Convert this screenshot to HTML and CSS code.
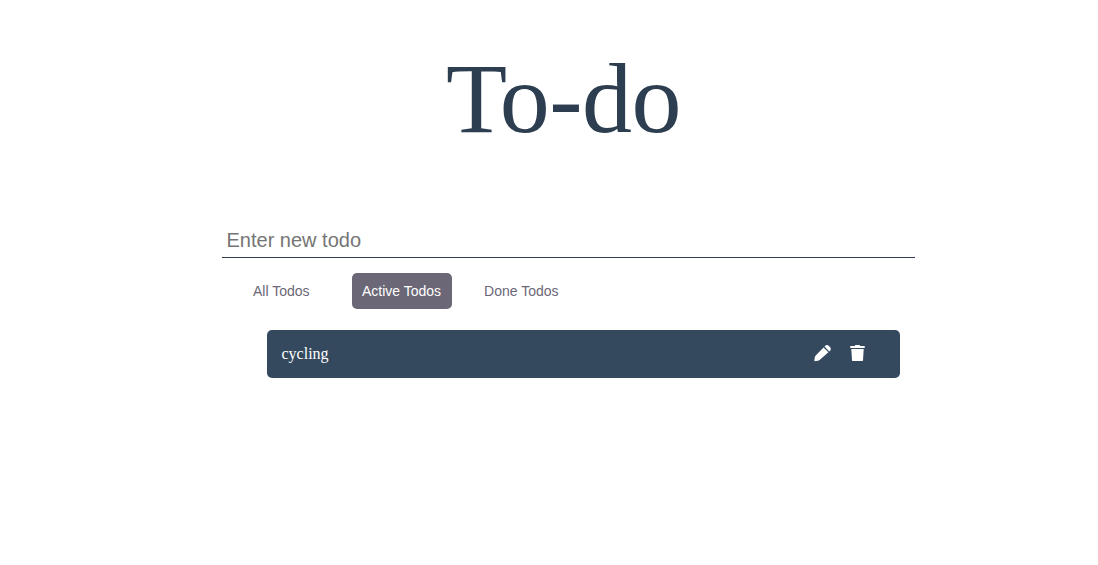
FILE: index.html
```html
<!DOCTYPE html>
<html lang="en">
<head>
<meta charset="utf-8">
<title>To-do</title>
<link rel="stylesheet" href="styles.css">
</head>
<body>
<main class="app">
  <h1 class="title">To-do</h1>
  <input class="new-todo" type="text" placeholder="Enter new todo">
  <nav class="filters">
    <button class="filter all">All Todos</button>
    <button class="filter active">Active Todos</button>
    <button class="filter">Done Todos</button>
  </nav>
  <ul class="list">
    <li class="todo">
      <span class="todo-text">cycling</span>
      <svg class="icon" viewBox="0 0 17 17"><path d="M9.600 2.500L14.400 7.300 5.900 14.800Q5.200 15.500 4 15.800L.3 16.200.700 12.500Q.9 11.300 1.700 10.400zM10.500 1.600L11.500.600Q13 -.4 14.700.700L16.200 2.300Q17.300 3.900 16.300 5.400L15.300 6.400z"/></svg>
      <svg class="icon trash" viewBox="0 0 15 17"><path d="M.3.900H4.800L5.300 0H9.700L10.200.900H14.700V2.900H.3zM1.300 4H13.700L13 15.200Q12.900 16.100 12 16.100H3Q2.100 16.100 2 15.200z"/></svg>
    </li>
  </ul>
</main>
</body>
</html>
```
FILE: styles.css
```css
body {
  margin: 0;
  background: #fff;
  font-family: "Liberation Serif", "Times New Roman", serif;
}

.app {
  width: 693px;
  margin-left: 222px;
}

.title {
  margin: 0;
  padding: 39px 10px 0 0;
  box-sizing: border-box;
  height: 222px;
  color: #2c3e50;
  font-size: 100px;
  font-weight: 400;
  letter-spacing: -0.5px;
  line-height: 120px;
  text-align: center;
}

.new-todo {
  display: block;
  box-sizing: border-box;
  width: 100%;
  height: 36px;
  padding: 2px 4px 0 4.500px;
  border: 0;
  border-bottom: 1px solid #2c3e50;
  outline: 0;
  background: transparent;
  font: 20px "Liberation Sans", Arial, sans-serif;
}

.new-todo::placeholder {
  color: #757575;
}

.filters {
  display: flex;
  gap: 22px;
  padding: 15px 0 0 21px;
}

.filter {
  height: 36px;
  padding: 0 10px;
  border: 0;
  border-radius: 5px;
  background: transparent;
  color: #6b6777;
  font: 14px "Liberation Sans", Arial, sans-serif;
}

.all {
  margin-right: 10px;
}

.active {
  width: 100px;
  margin-right: 0.500px;
  background: #6b6777;
  color: #fff;
}

.list {
  margin: 21px 15px 0 45px;
  padding: 0;
  list-style: none;
}

.todo {
  display: flex;
  align-items: center;
  box-sizing: border-box;
  height: 48px;
  padding: 0 35px 0 14.500px;
  border-radius: 5px;
  background: #34495e;
  color: #fff;
  font-size: 16px;
}

.todo-text {
  flex: 1;
}

.icon {
  width: 17px;
  height: 17px;
  margin-bottom: 1px;
  fill: currentColor;
}

.trash {
  width: 15px;
  margin-left: 19px;
}
```
